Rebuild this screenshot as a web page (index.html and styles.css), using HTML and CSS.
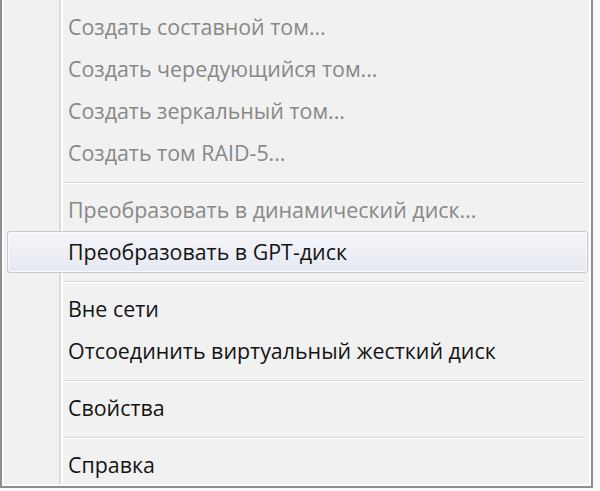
FILE: index.html
```
<!DOCTYPE html>
<html lang="ru">
<head>
<meta charset="utf-8">
<link rel="stylesheet" href="styles.css">
</head>
<body>
<div class="menu">
  <div class="item disabled">Создать составной том...</div>
  <div class="item disabled">Создать чередующийся том...</div>
  <div class="item disabled">Создать зеркальный том...</div>
  <div class="item disabled">Создать том RAID-5...</div>
  <div class="sep"></div>
  <div class="item disabled">Преобразовать в динамический диск...</div>
  <div class="item hover">Преобразовать в GPT-диск</div>
  <div class="sep"></div>
  <div class="item">Вне сети</div>
  <div class="item">Отсоединить виртуальный жесткий диск</div>
  <div class="sep"></div>
  <div class="item">Свойства</div>
  <div class="sep"></div>
  <div class="item">Справка</div>
</div>
</body>
</html>
```
FILE: styles.css
```
html, body {
  margin: 0;
  padding: 0;
}
body {
  background: #fafafa;
  width: 600px;
  height: 491px;
  overflow: hidden;
  font-family: "Open Sans", "Noto Sans", sans-serif;
}
.menu {
  box-sizing: border-box;
  width: 593px;
  padding-top: 6px;
  border-left: 2px solid #8e8e8e;
  border-right: 2px solid #8e8e8e;
  border-bottom: 2px solid #8e8e8e;
  background:
    linear-gradient(to right, transparent 57px, #dcdcdc 57px, #dcdcdc 59px, #ffffff 59px, #ffffff 61px, transparent 61px),
    #f1f1f1;
  box-shadow: inset 2px 0 #fdfdfd, inset -2px 0 #fdfdfd, inset 0 -2px #fdfdfd;
}
.item {
  box-sizing: border-box;
  height: 42px;
  display: flex;
  align-items: center;
  padding-left: 66px;
  padding-bottom: 1px;
  font-size: 21.4px;
  font-weight: 500;
  color: #141414;
  white-space: nowrap;
}
.item.disabled {
  color: #888888;
}
.item.hover {
  margin: 0 3px 0 5px;
  padding-left: 60px;
  border: 1px solid #c6cad4;
  border-radius: 3px;
  background: linear-gradient(to bottom, #f4f5f9, #e7e9f1);
  box-shadow: inset 0 0 0 1px #f9fafd;
}
.sep {
  margin: 8px 6px 5px 62px;
  border-top: 1px solid #d8d8d8;
  border-bottom: 1px solid #ffffff;
}
```
